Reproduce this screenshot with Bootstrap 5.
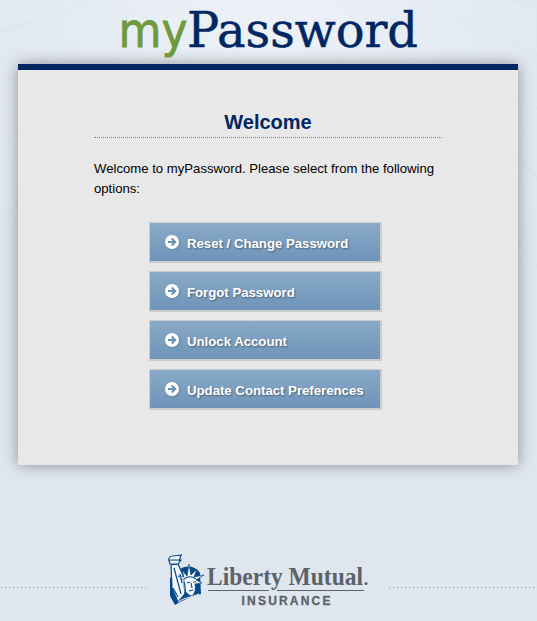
<!DOCTYPE html>
<html lang="en">
<head>
<meta charset="utf-8">
<meta name="viewport" content="width=device-width, initial-scale=1">
<title>myPassword</title>
<link href="https://cdn.jsdelivr.net/npm/bootstrap@5.3.0/dist/css/bootstrap.min.css" rel="stylesheet">
<style>
html, body { height: 621px; }
body { font-family: "Liberation Sans", Arial, sans-serif; font-size: 13.15px; line-height: 20px; color: #000; overflow: hidden;
  background:
    repeating-conic-gradient(from 3deg at 50% -60px, rgba(190,203,215,0) 0deg, rgba(190,203,215,0) 8.4deg, rgba(190,203,215,.13) 8.8deg, rgba(190,203,215,0) 9.2deg) 0 0 / 100% 270px no-repeat,
    radial-gradient(ellipse 330px 330px at 50% 20px, #edf2f8, #dfe6ee) #dee5ed; }
.brand-head { height: 64px; }
.panel { width: 500px; height: 401px; margin-left: 18px; background: #e8e8e8; border-top: 6px solid #002663; box-shadow: 0 0 14px rgba(0,0,0,.38); padding: 37px 76px 0; }
.page-title { font-size: 20px; line-height: 30px; color: #002663; border-bottom: 1px dotted #888; margin-bottom: 21px; }
.intro { margin-bottom: 23px; }
.option-list { width: 233px; margin-left: 55px; gap: 8px; }
.btn-option { height: 41px; border: solid #ccc; border-width: 1px 2px 2px 1px; border-radius: 0; padding: 3px 0 0 15px; gap: 7px; font-size: 13.2px; line-height: 20px; color: #fff; background: linear-gradient(#89aac8, #6f94b8); text-shadow: 1px 1px 2px rgba(0,0,0,.4); }
.btn-option:hover { color: #fff; border-color: #bbb; }
.btn-option svg { margin-top: -2px; filter: drop-shadow(1px 1px 1px rgba(0,0,0,.15)); }
.foot { margin-top: 82px; height: 74px; }
.dots { height: 1px; margin-top: 6px; background: repeating-linear-gradient(90deg, transparent 0 1px, #8f979f 1px 2px, transparent 2px 4px); }
.dots-left { width: 147px; }
.dots-right { width: 149px; }
.logo-box { width: 241px; }
</style>
</head>
<body>
<header class="brand-head">
<svg class="d-block" width="537" height="64" role="img" aria-label="myPassword">
<text x="118.500" y="46.500" font-family="DejaVu Sans, sans-serif" font-size="48" fill="#6e9a3c" stroke="#6e9a3c" stroke-width=".8" textLength="69" lengthAdjust="spacingAndGlyphs">my</text>
<text x="187" y="46.500" font-family="DejaVu Serif, serif" font-size="48" fill="#002663" stroke="#002663" stroke-width=".5" textLength="231" lengthAdjust="spacingAndGlyphs">Password</text>
</svg>
</header>
<main class="panel">
<h1 class="page-title fw-bold text-center">Welcome</h1>
<p class="intro">Welcome to myPassword. Please select from the following options:</p>
<nav class="option-list d-flex flex-column">
<a class="btn btn-option d-flex align-items-center fw-bold" href="#"><svg width="15" height="15" viewBox="0 0 15 15"><circle cx="7" cy="7" r="7" fill="#fff"/><path d="M3 7h7M6.700 3.500 10.200 7l-3.500 3.500" fill="none" stroke="#6d91b3" stroke-width="2"/></svg><span>Reset / Change Password</span></a>
<a class="btn btn-option d-flex align-items-center fw-bold" href="#"><svg width="15" height="15" viewBox="0 0 15 15"><circle cx="7" cy="7" r="7" fill="#fff"/><path d="M3 7h7M6.700 3.500 10.200 7l-3.500 3.500" fill="none" stroke="#6d91b3" stroke-width="2"/></svg><span>Forgot Password</span></a>
<a class="btn btn-option d-flex align-items-center fw-bold" href="#"><svg width="15" height="15" viewBox="0 0 15 15"><circle cx="7" cy="7" r="7" fill="#fff"/><path d="M3 7h7M6.700 3.500 10.200 7l-3.500 3.500" fill="none" stroke="#6d91b3" stroke-width="2"/></svg><span>Unlock Account</span></a>
<a class="btn btn-option d-flex align-items-center fw-bold" href="#"><svg width="15" height="15" viewBox="0 0 15 15"><circle cx="7" cy="7" r="7" fill="#fff"/><path d="M3 7h7M6.700 3.500 10.200 7l-3.500 3.500" fill="none" stroke="#6d91b3" stroke-width="2"/></svg><span>Update Contact Preferences</span></a>
</nav>
</main>
<footer class="foot d-flex align-items-center">
<div class="dots dots-left"></div>
<svg class="logo-box" height="74" viewBox="147 547 241 74" role="img" aria-label="Liberty Mutual Insurance">
<!-- statue -->
<path d="M179 570C186 564 196 566 200 573L201 594C194 596 184 599 175 605L170 596 170 578Z" fill="#07498a"/>
<path d="M171 565l7-1 8 18-1 12-7 8-6-14z" fill="#f4f7fa" stroke="#07498a" stroke-width="1.200"/>
<path d="M169 561c-1-3 1-5 4-5 3-1 6 0 8-1-1 3-1 4-2 6M169 560l1 4h8l3-4z" fill="#f4f7fa" stroke="#07498a" stroke-width="1.200"/>
<path d="M174 568l7 26M173 588l5 9M180 574l2 9" fill="none" stroke="#07498a" stroke-width="1.200"/>
<path d="M184 580l-6-4 6 1-2-7 5 6 2-12 2 11 6-6-3 8 10-2-8 5 6 3-7 1c1 5 0 9-3 12-4-1-7-4-8-8z" fill="#f4f7fa" stroke="#07498a" stroke-width=".7"/>
<path d="M184 579c4-3 8-3 12 0M187 583l3-1M193 582h3M191 583l1 5M189 591l4-1M184 582c2 6 2 11-1 16" fill="none" stroke="#07498a" stroke-width="1.100"/>
<path d="M178 602c5-4 14-5 21-8" fill="none" stroke="#f4f7fa" stroke-width="1"/>
<g fill="#5b626b">
<text x="207" y="585" font-family="Liberation Serif, Times New Roman, serif" font-weight="bold" font-size="25" textLength="156" lengthAdjust="spacingAndGlyphs">Liberty Mutual</text>
<circle cx="366" cy="583.500" r="1.500"/>
<path d="M208 590h61v1h-61zM277 590h87v1h-87z"/>
<text x="241.500" y="605" font-family="Liberation Sans, Arial, sans-serif" font-weight="bold" font-size="12" stroke="#5b626b" stroke-width=".3" textLength="89" lengthAdjust="spacing">INSURANCE</text>
</g>
</svg>
<div class="dots dots-right"></div>
</footer>
<script src="https://cdn.jsdelivr.net/npm/bootstrap@5.3.0/dist/js/bootstrap.bundle.min.js"></script>
</body>
</html>
